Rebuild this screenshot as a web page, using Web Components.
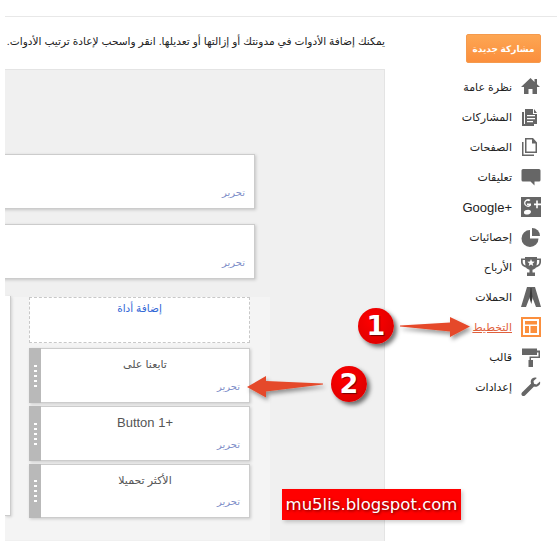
<!DOCTYPE html>
<html lang="ar">
<head>
<meta charset="utf-8">
<title>التخطيط</title>
<style>
  html, body { margin: 0; padding: 0; background: #fff; overflow: hidden; }
  body { width: 557px; height: 547px; font-family: "Liberation Sans", "DejaVu Sans", sans-serif; position: relative; }
</style>
</head>
<body>
<blog-page></blog-page>
<script>
const ICONS = {
  home: '<path d="M9.500 1 0 10h3v7h4.500v-5h4v5H16v-7h3l-3-2.800V2h-2.500v2.900z"/>',
  posts: '<path d="M1 5h2v12h10v2H1z"/><path d="M4 2h8v5h4v10H4zm9 0 3 4h-3zM6 8v1.300h8V8zm0 3v1.300h8V11zm0 3v1.300h6V14z" fill-rule="evenodd"/>',
  pages: '<path d="M1 5h1.500v12.500H13V19H1z"/><path d="M4 1h8l4 4.500V16H4zm1.500 1.500v12h9V6.500H11v-4z" fill-rule="evenodd"/>',
  comment: '<path d="M2 2h16a1.500 1.500 0 0 1 1.500 1.500v9.500a1.500 1.500 0 0 1-1.500 1.500h-4.500v4l-4-4H2A1.500 1.500 0 0 1 .500 13V3.500A1.500 1.500 0 0 1 2 2z"/>',
  gplus: '<path d="M0 0h20v20H0z"/><path d="M13 6.500h2.200V3.500h1.600v3H20v1.700h-3.200v3h-1.600v-3H13zM3 6a4 4 0 0 1 6.500-3L8 4.300A2.300 2.300 0 1 0 8 8H6V6.500h4v2A4 4 0 0 1 3 6zM3 15c0-2 5-3 6.500-1.500 1.500 1.800-.5 4-3.500 4S3 16.500 3 15z" fill="#fff"/>',
  pie: '<path d="M9 3v8.500h8.500A8.500 8.500 0 1 1 9 3z"/><path d="M11 1a8 8 0 0 1 8 8h-8z"/>',
  trophy: '<path d="M4 0h12v1.500h4V5c0 3-2.500 5-5 5.500-1 1.500-2.500 2-3.500 2.300v2.700H14V19H6v-3.500h2.500v-2.700C7.500 12.500 6 12 5 10.500 2.500 10 0 8 0 5V1.500h4zM1.700 3v2c0 1.700 1.300 3 2.800 3.500C4.200 7 4 5 4 3zm16.600 0H16c0 2-.2 4-.5 5.500 1.500-.5 2.800-1.800 2.800-3.500z" fill-rule="evenodd"/><path d="m10 2 1 2.600 2.700.1-2.100 1.700.7 2.600L10 7.500 7.700 9l.7-2.600-2.100-1.700 2.700-.1z" fill="#fff"/>',
  ads: '<path d="M6 0h8l6 20h-5L10 7 5 20H0z"/><path d="M9.500 1h1l1 10-1.200 6L8.500 11z" fill="#3a3a3a"/>',
  layout: '<path d="M0 0h20v20H0zm2 2v16h16V2z" fill-rule="evenodd"/><path d="M4 4h12v3.500H4zM4 9h4v7H4zm5.500 0H16v7H9.500z"/>',
  roller: '<path d="M1 1.500h15v2h3v7.500H10v2h2v7H7.500v-7h1V9.500h9V5.500H16v2.500H1z"/>',
  wrench: '<path d="M19 4.500 15.500 7.500 13 6.800 12.500 4 15.800 1C13.500 0 10.800 1 10 3.200c-.4 1.100-.3 2.300.1 3.200L1 15.500C.2 16.500.2 17.700 1 18.500s2 .8 3 0l9-9.100c1 .4 2.200.4 3.200 0C18.500 8.500 19.800 6.700 19 4.500z"/>'
};

class NavItem extends HTMLElement {
  connectedCallback() {
    const active = this.hasAttribute('active');
    const icon = ICONS[this.getAttribute('icon')];
    this.attachShadow({ mode: 'open' }).innerHTML = `
      <style>
        :host { display: flex; align-items: center; justify-content: flex-end; height: 30px; gap: 9px;
          font-size: ${this.hasAttribute('latin') ? 13 : 11}px; color: ${active ? '#e0603c' : '#222'}; }
        span { white-space: nowrap; ${active ? 'text-decoration: underline;' : ''} }
        svg { width: 20px; height: 20px; fill: ${active ? '#fb8f3d' : '#666'}; flex: none; }
      </style>
      <span><slot></slot></span>
      <svg viewBox="0 0 20 20">${icon}</svg>`;
  }
}
customElements.define('nav-item', NavItem);

class SideBar extends HTMLElement {
  connectedCallback() {
    this.attachShadow({ mode: 'open' }).innerHTML = `
      <style>
        :host { display: block; width: 75px; margin-left: 81px; padding-top: 17px; }
        .new { height: 29px; box-sizing: border-box; border: 1px solid #f59a4d; border-radius: 2px;
          background: linear-gradient(#fda653, #fb8f3d); color: #fff; font-size: 9px; font-weight: bold;
          display: flex; align-items: center; justify-content: center; white-space: nowrap; }
        .items { margin: 9px 0 0 -60px; }
      </style>
      <div class="new" dir="rtl">مشاركة جديدة</div>
      <div class="items"><slot></slot></div>`;
  }
}
customElements.define('side-bar', SideBar);

class GadgetCard extends HTMLElement {
  connectedCallback() {
    const handle = this.hasAttribute('handle');
    const latin = this.hasAttribute('latin');
    this.attachShadow({ mode: 'open' }).innerHTML = `
      <style>
        :host { display: flex; box-sizing: border-box; background: #fff; border: 1px solid #ccc;
          box-shadow: 1px 1px 3px rgba(0,0,0,.18); }
        .grip { width: 12px; flex: none; background: #b9b9b9; display: flex; flex-direction: column;
          justify-content: center; align-items: center; gap: 3px; margin: -1px 0 -1px -1px; }
        .grip i { width: 3px; height: 2px; background: #fff; }
        .body { flex: 1; display: flex; flex-direction: column; padding: 8px 9px 0; min-width: 0; }
        .title { text-align: center; font-size: ${latin ? 13 : 11}px; color: #555; height: 25px; line-height: 15px; }
        .edit { margin-top: auto; padding-bottom: 10px; font-size: 10px; color: #7f8fc9; text-align: right; }
      </style>
      ${handle ? '<div class="grip"><i></i><i></i><i></i><i></i><i></i></div>' : ''}
      <div class="body">
        <div class="title"><slot></slot></div>
        <div class="edit">تحرير</div>
      </div>`;
  }
}
customElements.define('gadget-card', GadgetCard);

class LayoutCanvas extends HTMLElement {
  connectedCallback() {
    this.attachShadow({ mode: 'open' }).innerHTML = `
      <style>
        :host { display: block; box-sizing: border-box; width: 380px; height: 472px; background: #f0f0f0;
          border: solid #e4e4e4; border-width: 1px 1px 0 0; overflow: hidden; padding-top: 84px; }
        .wide { width: 271px; height: 55px; margin-left: -21px; }
        .wide + .wide { margin-top: 15px; }
        .columns { margin-top: 18px; width: 265px; height: 243px; background: #f4f4f4;
          box-sizing: border-box; display: flex; }
        .left-col { width: 5px; height: 219px; flex: none; margin-top: -1px; background: #fff; border: solid #ccc; border-width: 0 1px 1px 0;
          box-shadow: 1px 1px 3px rgba(0,0,0,.15); }
        .right-col { width: 221px; margin-left: 18px; display: flex; flex-direction: column; }
        .add { height: 46px; box-sizing: border-box; border: 1px dashed #c8c8c8; background: #fff;
          text-align: center; color: #3367d6; font-size: 10.500px; padding-top: 4px; margin-bottom: 5px; }
        .right-col gadget-card { height: 55px; margin-bottom: 3px; }
        .right-col gadget-card:last-child { height: 54px; }
        .foot { height: 4px; width: 250px; border: 1px dashed #c8c8c8; border-bottom: 0; background: #fff; margin-top: 1px; }
      </style>
      <gadget-card class="wide"></gadget-card>
      <gadget-card class="wide"></gadget-card>
      <div class="columns">
        <div class="left-col"></div>
        <div class="right-col">
          <div class="add">إضافة أداة</div>
          <gadget-card handle>تابعنا على</gadget-card>
          <gadget-card handle latin>Button 1+</gadget-card>
          <gadget-card handle>الأكثر تحميلا</gadget-card>
        </div>
      </div>
      <div class="foot"></div>`;
  }
}
customElements.define('layout-canvas', LayoutCanvas);

class CalloutNum extends HTMLElement {
  connectedCallback() {
    this.attachShadow({ mode: 'open' }).innerHTML = `
      <style>
        :host { position: absolute; width: 36px; height: 36px; border-radius: 50%; box-sizing: border-box;
          background: radial-gradient(circle at 40% 35%, #f00, #d40000); box-shadow: 3px 3px 4px rgba(0,0,0,.55);
          color: #fff; font: bold 27px/36px "DejaVu Sans", sans-serif; text-align: center;
          text-shadow: 1px 1px 1px rgba(0,0,0,.5); }
      </style><slot></slot>`;
  }
}
customElements.define('callout-num', CalloutNum);

class BlogPage extends HTMLElement {
  connectedCallback() {
    this.attachShadow({ mode: 'open' }).innerHTML = `
      <style>
        :host { display: block; width: 557px; height: 547px; position: relative; overflow: hidden; }
        .rule { height: 1px; background: #e8e8e8; margin: 16px 0 0 5px; }
        .main { display: flex; padding-left: 5px; }
        .content { width: 380px; flex: none; }
        .hint { height: 52px; font-size: 10.600px; color: #222; line-height: 48px; text-align: right; white-space: nowrap; width: 380px; }
        .arrow { position: absolute; left: 0; top: 0; width: 557px; height: 547px; pointer-events: none; overflow: visible; }
        .stamp { position: absolute; left: 282px; top: 489px; width: 179px; height: 31px; background: #f00; color: #fff;
          font: 16.500px/32px "DejaVu Sans", sans-serif; text-align: center; text-shadow: 1px 1px 3px rgba(0,0,0,.6);
          box-shadow: 2px 2px 4px rgba(0,0,0,.2); white-space: nowrap; }
      </style>
      <div class="rule"></div>
      <div class="main">
        <div class="content">
          <div class="hint" dir="rtl">يمكنك إضافة الأدوات في مدونتك أو إزالتها أو تعديلها. انقر واسحب لإعادة ترتيب الأدوات.</div>
          <layout-canvas></layout-canvas>
        </div>
        <side-bar>
          <nav-item icon="home">نظرة عامة</nav-item>
          <nav-item icon="posts">المشاركات</nav-item>
          <nav-item icon="pages">الصفحات</nav-item>
          <nav-item icon="comment">تعليقات</nav-item>
          <nav-item icon="gplus" latin>Google+</nav-item>
          <nav-item icon="pie">إحصائيات</nav-item>
          <nav-item icon="trophy">الأرباح</nav-item>
          <nav-item icon="ads">الحملات</nav-item>
          <nav-item icon="layout" active>التخطيط</nav-item>
          <nav-item icon="roller">قالب</nav-item>
          <nav-item icon="wrench">إعدادات</nav-item>
        </side-bar>
      </div>
      <svg class="arrow" viewBox="0 0 557 547">
        <defs><filter id="s" x="-20%" y="-50%" width="140%" height="200%"><feDropShadow dx="2" dy="3" stdDeviation="2" flood-color="#000" flood-opacity=".4"/></filter></defs>
        <path d="M400 325.500 450 322.500V317L470 326.500 450 337V331.500L400 326.500z" fill="#e5492a" filter="url(#s)"/>
        <path d="M323 383.500 266 381V376L247 387 266 397.500V391.500L323 384.500z" fill="#e5492a" filter="url(#s)"/>
      </svg>
      <callout-num style="left:358px;top:308px">1</callout-num>
      <callout-num style="left:331px;top:366px">2</callout-num>
      <div class="stamp">mu5lis.blogspot.com</div>`;
  }
}
customElements.define('blog-page', BlogPage);
</script>
</body>
</html>
